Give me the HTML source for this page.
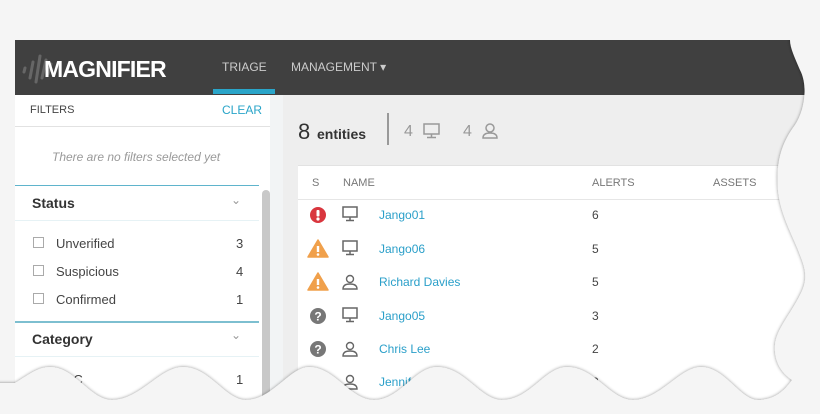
<!DOCTYPE html>
<html><head><style>
*{margin:0;padding:0;box-sizing:border-box}
html,body{width:820px;height:414px;overflow:hidden}
body{background:#f5f5f5;font-family:"Liberation Sans",sans-serif;position:relative}
.a{position:absolute}
.t{position:absolute;white-space:nowrap}
.lnk{color:#2a9fc9}
.g{color:#444;font-size:12px}
</style></head><body>
<div class="a" style="left:15px;top:40px;width:800px;height:374px;background:#eeeeee"></div>
<div class="a" style="left:15px;top:40px;width:800px;height:55px;background:#404040"></div>
<svg class="a" style="left:18px;top:48px" width="40" height="40"><g stroke="#666" stroke-width="3" stroke-linecap="round"><line x1="6" y1="24" x2="7" y2="20"/><line x1="12" y1="30" x2="15" y2="14"/><line x1="18" y1="34" x2="22" y2="8"/><line x1="24" y1="30" x2="28" y2="12"/><line x1="30" y1="26" x2="33" y2="16"/></g></svg>
<div class="t" style="left:44px;top:56px;font-size:23px;font-weight:bold;color:#fff;letter-spacing:-0.8px">MAGNIFIER</div>
<div class="t" style="left:222px;top:60px;font-size:12px;color:#ccc">TRIAGE</div>
<div class="a" style="left:213px;top:89px;width:62px;height:5px;background:#2aa5c9"></div>
<div class="t" style="left:291px;top:60px;font-size:12px;color:#ccc">MANAGEMENT ▾</div>
<div class="a" style="left:15px;top:95px;width:262px;height:319px;background:#fff;border-right:1px solid #ddd"></div>
<div class="t" style="left:30px;top:104px;font-size:11px;color:#444">FILTERS</div>
<div class="t" style="left:222px;top:103px;font-size:12px;color:#2aa5c9">CLEAR</div>
<div class="a" style="left:15px;top:126px;width:261px;height:1px;background:#e2e2e2"></div>
<div class="t" style="left:52px;top:150px;font-size:12px;font-style:italic;color:#999">There are no filters selected yet</div>
<div class="a" style="left:15px;top:185px;width:244px;height:1px;background:#5fb4cc"></div>
<div class="a" style="left:262px;top:190px;width:8px;height:224px;background:#c8c8c8;border-radius:4px"></div>
<div class="a" style="left:270px;top:95px;width:13px;height:319px;background:#f2f4f5"></div>
<div class="t" style="left:32px;top:195px;font-size:14px;font-weight:bold;color:#333">Status</div>
<div class="t" style="left:231px;top:193px;font-size:12px;color:#999">⌄</div>
<div class="a" style="left:15px;top:220px;width:244px;height:1px;background:#e6f2f5"></div>
<div class="a" style="left:33px;top:237px;width:11px;height:11px;border:1px solid #aaa"></div>
<div class="t g" style="left:56px;top:236px;font-size:13px">Unverified</div><div class="t g" style="left:236px;top:236px;font-size:13px">3</div>
<div class="a" style="left:33px;top:265px;width:11px;height:11px;border:1px solid #aaa"></div>
<div class="t g" style="left:56px;top:264px;font-size:13px">Suspicious</div><div class="t g" style="left:236px;top:264px;font-size:13px">4</div>
<div class="a" style="left:33px;top:293px;width:11px;height:11px;border:1px solid #aaa"></div>
<div class="t g" style="left:56px;top:292px;font-size:13px">Confirmed</div><div class="t g" style="left:236px;top:292px;font-size:13px">1</div>
<div class="a" style="left:15px;top:321px;width:244px;height:2px;background:#7dbfd0"></div>
<div class="t" style="left:32px;top:331px;font-size:14px;font-weight:bold;color:#333">Category</div>
<div class="t" style="left:231px;top:328px;font-size:12px;color:#999">⌄</div>
<div class="a" style="left:15px;top:356px;width:244px;height:1px;background:#e6f2f5"></div>
<div class="t g" style="left:56px;top:372px;font-size:13px">ESC</div><div class="t g" style="left:236px;top:372px;font-size:13px">1</div>
<div class="t" style="left:298px;top:119px;font-size:22px;color:#333">8</div>
<div class="t" style="left:317px;top:126px;font-size:14px;font-weight:bold;color:#333">entities</div>
<div class="a" style="left:387px;top:113px;width:2px;height:32px;background:#999"></div>
<div class="t" style="left:404px;top:123px;font-size:16px;color:#999">4</div>
<svg class="a" style="left:422px;top:122px" width="20" height="18" fill="none" stroke="#999" stroke-width="1.5"><rect x="2" y="2" width="15" height="10"/><line x1="9.5" y1="12" x2="9.5" y2="15"/><line x1="5" y1="15.5" x2="14" y2="15.5"/></svg>
<div class="t" style="left:463px;top:123px;font-size:16px;color:#999">4</div>
<svg class="a" style="left:480px;top:122px" width="20" height="18" fill="none" stroke="#999" stroke-width="1.5"><circle cx="10" cy="6" r="4"/><path d="M3 16 Q3 11 10 11 Q17 11 17 16 Z"/></svg>
<div class="a" style="left:298px;top:165px;width:517px;height:249px;background:#fff;border-top:1px solid #e2e2e2"></div>
<div class="t" style="left:312px;top:177px;font-size:11px;color:#777">S</div>
<div class="t" style="left:343px;top:177px;font-size:11px;color:#777">NAME</div>
<div class="t" style="left:592px;top:177px;font-size:11px;color:#777">ALERTS</div>
<div class="t" style="left:713px;top:177px;font-size:11px;color:#777">ASSETS</div>
<div class="a" style="left:298px;top:199px;width:517px;height:1px;background:#e6e6e6"></div>
<svg class="a" style="left:0;top:0" width="820" height="414">
<defs>
<g id="mon" fill="none" stroke="#666" stroke-width="1.5"><rect x="-7" y="-7" width="14" height="10"/><line x1="0" y1="3" x2="0" y2="6"/><line x1="-4" y1="6.5" x2="4" y2="6.5"/></g>
<g id="per" fill="none" stroke="#666" stroke-width="1.4"><circle cx="0" cy="-3" r="3.5"/><path d="M-7 7 Q-7 2 0 2 Q7 2 7 7 Z"/></g>
<g id="err"><circle r="8" fill="#d9363e"/><rect x="-1.5" y="-5" width="3" height="6.5" rx="1" fill="#fff"/><circle cy="4" r="1.6" fill="#fff"/></g>
<g id="warn"><path d="M0 -9 L10 8 L-10 8 Z" fill="#f0a04b" stroke="#f0a04b" stroke-linejoin="round" stroke-width="1.5"/><rect x="-1.2" y="-3" width="2.4" height="6" fill="#fff"/><circle cy="5.5" r="1.3" fill="#fff"/></g>
<g id="q"><circle r="8" fill="#777"/><text x="0" y="4.5" text-anchor="middle" font-size="12" font-weight="bold" fill="#fff" font-family="Liberation Sans">?</text></g>
</defs>
<use href="#err" x="318" y="215"/><use href="#mon" x="350" y="214"/>
<use href="#warn" x="318" y="249"/><use href="#mon" x="350" y="248"/>
<use href="#warn" x="318" y="282"/><use href="#per" x="350" y="282"/>
<use href="#q" x="318" y="316"/><use href="#mon" x="350" y="315"/>
<use href="#q" x="318" y="349"/><use href="#per" x="350" y="349"/>
<use href="#per" x="350" y="382"/>
</svg>
<div class="t lnk" style="left:379px;top:208px;font-size:12px">Jango01</div><div class="t g" style="left:592px;top:208px">6</div>
<div class="t lnk" style="left:379px;top:242px;font-size:12px">Jango06</div><div class="t g" style="left:592px;top:242px">5</div>
<div class="t lnk" style="left:379px;top:275px;font-size:12px">Richard Davies</div><div class="t g" style="left:592px;top:275px">5</div>
<div class="t lnk" style="left:379px;top:309px;font-size:12px">Jango05</div><div class="t g" style="left:592px;top:309px">3</div>
<div class="t lnk" style="left:379px;top:342px;font-size:12px">Chris Lee</div><div class="t g" style="left:592px;top:342px">2</div>
<div class="t lnk" style="left:379px;top:375px;font-size:12px">Jennifer</div><div class="t g" style="left:592px;top:375px">2</div>
<svg class="a" style="left:0;top:0" width="820" height="414">
<defs><filter id="sh" x="-10%" y="-10%" width="120%" height="120%"><feDropShadow dx="0" dy="0" stdDeviation="1.5" flood-color="#000" flood-opacity="0.45"/></filter></defs>
<path filter="url(#sh)" fill="#f5f5f5" d="M-20 383 L15 383 C30 374 38 367 50 367 C75 367 90 400 112 400 C140 400 160 367 183 367 C210 367 225 400 246 400 C272 400 290 367 309 367 C335 367 350 400 374 400 C400 400 415 367 437 367 C465 367 480 400 502 400 C530 400 545 367 567 367 C595 367 610 400 633 400 C660 400 680 367 701 367 C725 367 740 400 758 400 C775 400 785 390 792 380 C780 372 774 360 775 345 C776 330 790 315 800 295 C808 280 806 270 800 255 C795 240 780 215 778 190 C776 165 780 145 795 125 C805 110 808 85 800 70 C795 58 790 48 790 40 L790 -20 L840 -20 L840 440 L-20 440 Z"/>
<rect x="0" y="0" width="820" height="40" fill="#f5f5f5"/>
</svg>
</body></html>
